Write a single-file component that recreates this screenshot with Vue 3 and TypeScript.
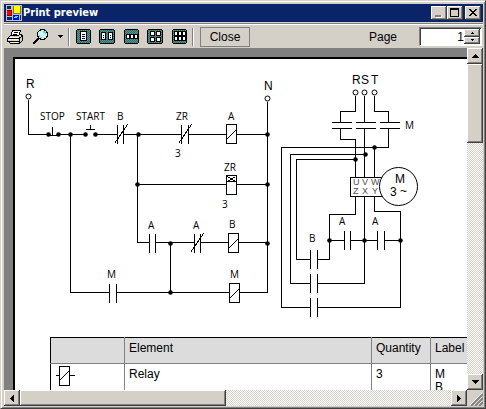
<script setup lang="ts">
import { ref } from 'vue'

interface Layout {
  label: string
  width: number
  cells: { x: number; y: number; w: number; h: number; lines?: boolean }[]
}

type Point = [number, number]

const page = ref('1')

const layouts: Layout[] = [
  { label: 'One page', width: 15, cells: [{ x: 4, y: 2, w: 5, h: 8, lines: true }] },
  {
    label: 'Two pages',
    width: 16,
    cells: [
      { x: 2, y: 3, w: 3, h: 6, lines: true },
      { x: 9, y: 3, w: 3, h: 6, lines: true },
    ],
  },
  {
    label: 'Three pages',
    width: 15,
    cells: [2, 6, 10].map((x) => ({ x, y: 5, w: 2, h: 3 })),
  },
  {
    label: 'Four pages',
    width: 16,
    cells: [2, 8].flatMap((y) => [3, 9].map((x) => ({ x, y, w: 3, h: 3 }))),
  },
  {
    label: 'Six pages',
    width: 15,
    cells: [2, 7].flatMap((y) => [2, 6, 10].map((x) => ({ x, y, w: 2, h: 3 }))),
  },
]

const wires = [
  'M28 99V134H48M58 134H85M95 134H117M123 134H181M188 134H226M236 134H267',
  'M267 101V292M137 134V242M70 134V292M170 242V292',
  'M137 184H226M236 184H267',
  'M137 242H149M155 242H194M200 242H228M238 242H267',
  'M70 292H109M116 292H229M239 292H267',
  'M48 135H58M52 126V135M85 129H94M90 124V129',
  'M355 95V111H340V122M340 128V139H355V177',
  'M364 95V122M364 128V177M374 95V111H388V122M388 128V147M374 147V177',
  'M331 122H351M331 128H351M355 122H375M355 128H375M379 122H399M379 128H399',
  'M388 147H281V307H310M364 154H290V283H310M355 159H296V259H310',
  'M317 259H329V214H355V196M317 283H364V196M317 307H400V211H374V196',
  'M329 240H344M350 240H377M384 240H400',
].join('')

// Contact plates: left x, right x, top y
const contacts: [number, number, number][] = [
  [117, 123, 124],
  [181, 188, 124],
  [149, 155, 233],
  [194, 200, 233],
  [109, 116, 283],
  [344, 350, 230],
  [377, 384, 230],
  [310, 317, 249],
  [310, 317, 273],
  [310, 317, 297],
]

const slashes: Point[] = [
  [114, 143],
  [178, 143],
  [190, 252],
]

const coils: Point[] = [
  [226, 124],
  [228, 233],
  [229, 283],
]

const dots: Point[] = [
  [48, 134], [58, 134], [70, 134], [85, 134], [95, 134], [138, 134], [267, 134],
  [137, 184], [267, 184], [170, 243], [267, 243], [170, 292],
  [374, 147], [365, 154], [355, 159], [329, 240], [364, 240], [400, 240],
]

const terminals: Point[] = [
  [28, 96],
  [267, 98],
  [355, 92],
  [364, 92],
  [374, 92],
]

const labels: [string, number, number][] = [
  ['STOP', 40, 120], ['START', 76, 120], ['B', 117, 120], ['ZR', 176, 120], ['A', 228, 120],
  ['3', 175, 157], ['ZR', 224, 171], ['3', 222, 208], ['A', 148, 229], ['A', 193, 229],
  ['B', 229, 228], ['M', 107, 278], ['M', 230, 278], ['M', 405, 129], ['A', 339, 225],
  ['A', 372, 225], ['B', 309, 242],
]

const bigLabels: [string, number, number][] = [
  ['R', 26, 88], ['N', 264, 90], ['R', 352, 84], ['S', 361, 84], ['T', 371, 84],
  ['M', 395, 183], ['3', 390, 196], ['~', 400, 195],
]

const pins: [string, number, number][] = [
  ['U', 353, 185], ['V', 362, 185], ['W', 371, 185],
  ['Z', 353, 194], ['X', 362, 194], ['Y', 372, 194],
]
</script>

<template>
  <div class="window">
    <header class="titlebar">
      <svg class="app-icon" width="16" height="16" viewBox="0 0 16 16" shape-rendering="crispEdges">
        <rect width="16" height="16" fill="#c0c0c0" />
        <path fill="#0a246a" d="M1 1h4v3h-4zM1 12h5v3h-5zM14 10h1v5h-1z" />
        <rect x="7" y="1" width="8" height="8" fill="#808000" />
        <rect x="8" y="1" width="6" height="7" fill="#ff0" />
        <rect x="1" y="5" width="5" height="6" fill="#800000" />
        <rect x="1" y="6" width="4" height="4" fill="#f00" />
        <rect x="7" y="10" width="6" height="5" fill="#00f" />
        <path fill="#0ff" d="M9 11h3v1h-1v1h-3v-1h1z" />
      </svg>
      <h1>Print preview</h1>
      <button class="bevel caption" aria-label="Minimize">
        <svg width="10" height="10" shape-rendering="crispEdges">
          <path fill="#fff" d="M2 8h6v2H2z" />
          <path fill="#808080" d="M1 7h6v2H1z" />
        </svg>
      </button>
      <button class="bevel caption" aria-label="Maximize">
        <svg width="10" height="10" shape-rendering="crispEdges">
          <path fill-rule="evenodd" d="M0 0h9v9H0zM1 2v6h7V2z" />
        </svg>
      </button>
      <button class="bevel caption close" aria-label="Close window">
        <svg width="10" height="10" shape-rendering="crispEdges">
          <path
            d="M1 1h2v1h1v1h2V2h1V1h2v1H8v1H7v1H6v1h1v1h1v1h1v1H7V7H6V6H4v1H3v1H1V7h1V6h1V5h1V4H3V3H2V2H1z"
          />
        </svg>
      </button>
    </header>

    <div class="toolbar">
      <button class="tool" aria-label="Print">
        <svg width="17" height="16" shape-rendering="crispEdges">
          <path fill="#fff" d="M5 1h9l-3 7H3z" />
          <path
            fill="none"
            stroke="#000"
            d="M5 1.5h9M5.500 1v2M4.500 3v3M3.500 6v1M13.500 1v2M12.500 3v3M7 3.500h4M6 5.500h4M1 8.500h11M12 7.500h2M14 6.500h2"
          />
          <path fill="#d4d0c8" d="M2 7h12v2h2v4h-3v2H2z" />
          <path
            fill="none"
            stroke="#000"
            d="M3 6.500h9M2 7.500h1M1 8.500h1M.500 9v4M1 9.500h11M12 8.500h2M14 7.500h2M13 5.500h2M15.500 6v6M1 12.500h11M2 13.500h1M3 14.500h10M12.500 9v5M14 12.500h1M13 13.500h1"
          />
          <path fill="#fff" d="M2 8h10v1H2zM1 10h10v1H1zM4 13h7v1H4z" />
          <path fill="#ff0" d="M7 11h3v1H7z" />
        </svg>
      </button>
      <button class="tool zoom" aria-label="Zoom">
        <svg width="17" height="16" shape-rendering="crispEdges">
          <path fill="none" stroke="#000" stroke-width="2" d="M7 9L1 15" />
          <circle cx="10.500" cy="5.500" r="5" fill="#d8ecec" stroke="#000" />
          <path fill="#0ff" d="M11 2h2v1h1v2h-1V4h-2zM7 6h1v2h2v1H8V8H7z" />
          <path fill="#fff" d="M9 3h2v2H9zM11 7h2v1h-2z" />
        </svg>
        <svg class="drop" width="5" height="3" shape-rendering="crispEdges">
          <path d="M0 0h5v1H4v1H3v1H2V2H1V1H0z" />
        </svg>
      </button>
      <span class="divider"></span>
      <div class="layouts">
        <button v-for="l in layouts" :key="l.label" class="tool layout" :aria-label="l.label">
          <svg :width="l.width" height="15" shape-rendering="crispEdges">
            <defs>
              <pattern id="dither" width="2" height="2" patternUnits="userSpaceOnUse">
                <rect width="2" height="2" fill="#008080" />
                <path fill="#808080" d="M0 0h1v1H0zM1 1h1v1H1z" />
              </pattern>
            </defs>
            <path :d="`M1 0H${l.width - 1}V1H${l.width}V14H${l.width - 1}V15H1V14H0V1H1z`" />
            <rect x="1" y="1" :width="l.width - 2" height="13" fill="url(#dither)" />
            <g v-for="(c, i) in l.cells" :key="i">
              <rect :x="c.x" :y="c.y" :width="c.w + 2" :height="c.h + 2" />
              <rect :x="c.x + 1" :y="c.y + 1" :width="c.w" :height="c.h" fill="#fff" />
              <path
                v-if="c.lines"
                :d="`M${c.x + 2} ${c.y + 3}h${c.w - 2}v1h${2 - c.w}zM${c.x + 2} ${c.y + 5}h${c.w - 2}v1h${2 - c.w}zM${c.x + 2} ${c.y + 7}h${c.w - 2}v1h${2 - c.w}z`"
                fill="#000080"
              />
            </g>
          </svg>
        </button>
      </div>
      <span class="divider"></span>
      <button class="close-preview">Close</button>
      <label class="page-label" for="page-number">Page</label>
      <div class="spinner">
        <input id="page-number" v-model="page" type="text" inputmode="numeric" />
        <div class="steps">
          <button class="bevel" aria-label="Next page">
            <svg width="3" height="2" shape-rendering="crispEdges"><path d="M1 0h1v1h1v1H0V1h1z" /></svg>
          </button>
          <button class="bevel" aria-label="Previous page">
            <svg width="3" height="2" shape-rendering="crispEdges"><path d="M0 0h3v1H2v1H1V1H0z" /></svg>
          </button>
        </div>
      </div>
    </div>

    <main class="body">
      <div class="viewport">
        <article class="paper">
          <svg class="diagram" width="452" height="278" viewBox="15 59 452 278">
            <g transform="translate(.5 .5)" shape-rendering="crispEdges" fill="none" stroke="#000">
              <path :d="wires" />
              <path
                v-for="([a, b, y], i) in contacts"
                :key="i"
                :d="`M${a} ${y}v19M${b} ${y}v19`"
              />
              <path v-for="([x, y], i) in slashes" :key="i" :d="`M${x} ${y}l13 -19`" />
              <g v-for="([x, y], i) in coils" :key="i">
                <rect :x="x" :y="y" width="10" height="19" />
                <path :d="`M${x} ${y + 15}l10 -10`" />
              </g>
              <rect x="226" y="175" width="10" height="19" />
              <path d="M226 181H236M227 176L235 181M227 181L235 176" />
              <rect x="350" y="177" width="34" height="19" />
            </g>
            <g transform="translate(.5 .5)">
              <circle v-for="([x, y], i) in dots" :key="i" :cx="x" :cy="y" r="2.300" />
              <g fill="#fff" stroke="#000">
                <circle v-for="([x, y], i) in terminals" :key="i" :cx="x" :cy="y" r="2.500" />
                <circle cx="398" cy="186" r="19" />
              </g>
            </g>
            <text v-for="([t, x, y], i) in labels" :key="i" class="small" :x="x" :y="y">{{ t }}</text>
            <text v-for="([t, x, y], i) in bigLabels" :key="i" class="big" :x="x" :y="y">{{ t }}</text>
            <text v-for="([t, x, y], i) in pins" :key="i" class="pin" :x="x" :y="y">{{ t }}</text>
          </svg>
          <table>
            <colgroup>
              <col class="c-symbol" />
              <col class="c-element" />
              <col class="c-quantity" />
              <col class="c-label" />
            </colgroup>
            <thead>
              <tr>
                <th aria-label="Symbol"></th>
                <th>Element</th>
                <th>Quantity</th>
                <th>Label</th>
              </tr>
            </thead>
            <tbody>
              <tr>
                <td>
                  <svg class="symbol" width="20" height="20" shape-rendering="crispEdges">
                    <path
                      transform="translate(.5 .5)"
                      fill="none"
                      stroke="#000"
                      d="M4 0H14V19H4ZM0 9H4M14 9H19M4 14L14 4"
                    />
                  </svg>
                </td>
                <td>Relay</td>
                <td>3</td>
                <td>M<br />B</td>
              </tr>
            </tbody>
          </table>
        </article>
      </div>
      <div class="track vertical">
        <button class="bevel arrow" aria-label="Scroll up">
          <svg width="7" height="4" shape-rendering="crispEdges"><path d="M3 0h1v1h1v1h1v1h1v1H0V3h1V2h1V1h1z" /></svg>
        </button>
        <div class="bevel thumb"></div>
        <button class="bevel arrow end" aria-label="Scroll down">
          <svg width="7" height="4" shape-rendering="crispEdges"><path d="M0 0h7v1H6v1H5v1H4v1H3V3H2V2H1V1H0z" /></svg>
        </button>
      </div>
      <div class="track horizontal">
        <button class="bevel arrow" aria-label="Scroll left">
          <svg width="4" height="7" shape-rendering="crispEdges"><path d="M3 0h1v7H3V6H2V5H1V4H0V3h1V2h1V1h1z" /></svg>
        </button>
        <div class="bevel thumb"></div>
        <button class="bevel arrow end" aria-label="Scroll right">
          <svg width="4" height="7" shape-rendering="crispEdges"><path d="M0 0h1v1h1v1h1v1h1v1H3v1H2v1H1v1H0z" /></svg>
        </button>
      </div>
      <svg class="grip" width="16" height="16">
        <path stroke="#fff" d="M3 15L15 3M7 15L15 7M11 15L15 11" />
        <path stroke="#808080" stroke-width="2" d="M4 16L16 4M8 16L16 8M12 16L16 12" />
      </svg>
    </main>
  </div>
</template>

<style>
body {
  margin: 0;
}
</style>

<style scoped>
.window {
  box-sizing: border-box;
  height: 100vh;
  display: flex;
  flex-direction: column;
  border: 1px solid;
  border-color: #d4d0c8 #404040 #404040 #d4d0c8;
  box-shadow: inset 1px 1px #fff, inset -1px -1px #808080;
  padding: 3px 2px 2px 3px;
  background: #d4d0c8;
  color: #000;
  font-family: "Liberation Sans", Arial, sans-serif;
  font-size: 12px;
}

button {
  box-sizing: border-box;
  margin: 0;
  padding: 0;
  border: 0;
  background: #d4d0c8;
  color: #000;
  font: inherit;
  display: flex;
  align-items: center;
  justify-content: center;
}

svg {
  display: block;
  flex: none;
}

.bevel {
  background: #d4d0c8;
  box-shadow: inset -1px -1px #404040, inset 1px 1px #fff, inset -2px -2px #808080;
}

.titlebar {
  flex: none;
  display: flex;
  align-items: center;
  height: 18px;
  padding: 0 2px;
  background: #0a246a;
}

h1 {
  flex: 1;
  margin: 0 0 0 1px;
  color: #fff;
  font: bold 11px/18px "DejaVu Sans Condensed", "DejaVu Sans", sans-serif;
}

.caption {
  width: 16px;
  height: 14px;
}

.caption.close {
  margin-left: 2px;
}

.toolbar {
  flex: none;
  display: flex;
  align-items: center;
  height: 23px;
  margin-top: 1px;
  border-top: 1px solid #808080;
  box-shadow: inset 0 1px #fff;
  padding: 1px 1px 0 3px;
}

.tool {
  height: 20px;
}

.tool.zoom {
  margin-left: 8px;
  gap: 9px;
}

.divider {
  flex: none;
  width: 1px;
  height: 18px;
  margin-left: 5px;
  border-left: 1px solid #808080;
  background: #fff;
}

.layouts {
  display: flex;
  margin: 0 -4px 0 1px;
}

.layout {
  width: 24px;
}

.close-preview {
  width: 50px;
  height: 20px;
  margin-left: 6px;
  border: 1px solid #808080;
}

.close-preview,
.page-label {
  font-family: "Liberation Sans Narrow", "Liberation Sans", Arial, sans-serif;
  font-size: 12px;
}

.page-label {
  margin-left: auto;
  margin-right: 22px;
}

.spinner {
  box-sizing: border-box;
  display: flex;
  width: 63px;
  height: 19px;
  border: 1px solid;
  border-color: #808080 #fff #fff #808080;
  box-shadow: inset 1px 1px #404040;
  padding: 1px;
  background: #fff;
}

.spinner input {
  flex: 1;
  min-width: 0;
  box-sizing: border-box;
  border: 0;
  padding: 0;
  background: none;
  color: #000;
  font: 12px/14px "Liberation Sans", Arial, sans-serif;
  text-align: right;
  outline: 0;
}

.steps {
  display: grid;
  grid-template-rows: 1fr 1fr;
  width: 16px;
}

.body {
  flex: 1;
  min-height: 0;
  display: grid;
  grid-template: minmax(0, 1fr) 16px / minmax(0, 1fr) 16px;
}

.viewport {
  overflow: hidden;
  padding: 9px 0 0 9px;
  background: #808080;
}

.paper {
  width: 640px;
  min-height: 900px;
  border: 2px solid #000;
  background: #fff;
}

text {
  fill: #000;
}

.small {
  font: 10px "Open Sans", "Noto Sans", sans-serif;
}

.big {
  font: 12px "Liberation Sans", Arial, sans-serif;
}

.pin {
  fill: #505050;
  font: 9px "Liberation Sans", Arial, sans-serif;
}

table {
  width: 560px;
  margin-left: 35px;
  table-layout: fixed;
  border-collapse: collapse;
  border: 1px solid #000;
  line-height: 13px;
}

.c-symbol {
  width: 74px;
}

.c-element {
  width: 247px;
}

.c-quantity {
  width: 59px;
}

th,
td {
  border: 1px solid #808080;
  padding: 4px;
  font-weight: normal;
  text-align: left;
  vertical-align: top;
}

tr > :first-child {
  border-left-color: #000;
}

th {
  height: 17px;
  border-top-color: #000;
  background: #dcdcdc;
}

.symbol {
  margin-top: -2px;
}

.track {
  display: flex;
  background: repeating-conic-gradient(#fff 0 25%, #d4d0c8 0 50%) 0 0 / 2px 2px;
}

.vertical {
  flex-direction: column;
}

.arrow {
  flex: none;
  width: 16px;
  height: 16px;
}

.end {
  margin-top: auto;
}

.horizontal .end {
  margin: 0 0 0 auto;
}

.vertical .thumb {
  height: 23%;
  min-height: 16px;
}

.horizontal .thumb {
  width: 206px;
}

.grip {
  background: #d4d0c8;
}
</style>
